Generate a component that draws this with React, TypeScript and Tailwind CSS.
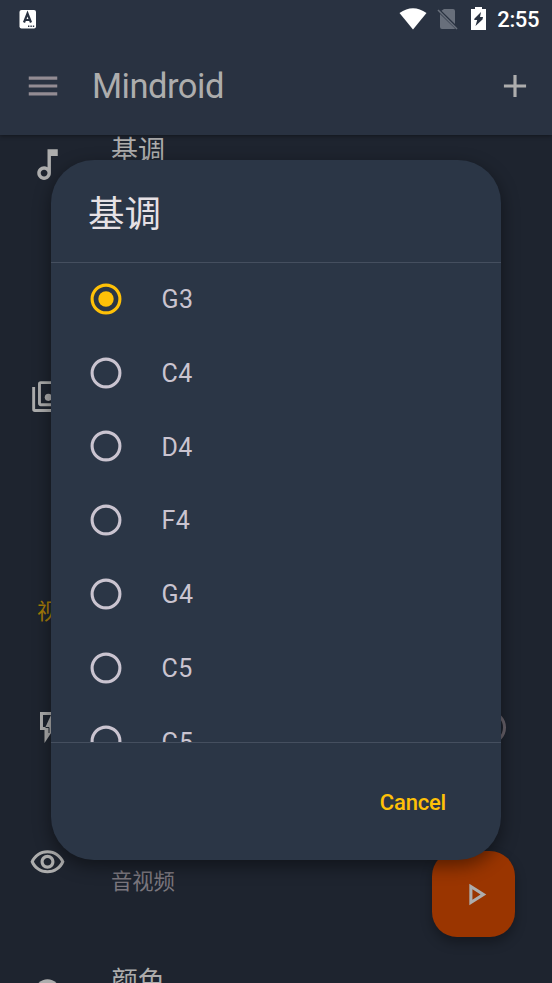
import React from 'react';

const notes = ['G3', 'C4', 'D4', 'F4', 'G4', 'C5', 'G5'];

const StatusBar: React.FC = () => (
  <div className="flex h-[37px] items-center justify-between pl-[19px] pr-[13px] text-white">
    <svg width="18" height="20" viewBox="0 0 18 20">
      <rect x="0.5" y="1" width="16.5" height="18.5" rx="2" fill="white" />
      <path d="M5 13.5L8.5 4.5L12 13.5M6.2 11H10.8" fill="none" stroke="#293241" strokeWidth="2.2" />
      <path d="M9 17.2H15.5" stroke="#293241" strokeWidth="1.4" strokeDasharray="1.4 1" />
    </svg>
    <div className="flex items-center">
      <svg width="28" height="22" viewBox="0 0 28 22" fill="white">
        <path d="M0.5 5Q14 -4.5 27.5 5L14 21.5Z" />
      </svg>
      <svg className="ml-[10px]" width="21" height="22" viewBox="0 0 21 22">
        <path d="M7 1H16Q18 1 18 3V16L4.5 2.8ZM3 6L18 20.5Q17.5 21 16.5 21H5Q3 21 3 19Z" fill="#686f7b" />
        <path d="M1 2L20 21" stroke="#686f7b" strokeWidth="1.6" />
      </svg>
      <svg className="ml-[13px]" width="15" height="23" viewBox="0 0 15 23">
        <path d="M4 0H11V2H15V23H0V2H4Z" fill="white" />
        <path d="M10 5L3.5 11.5L3.2 13H6.2L4.5 19L11.5 12.5L12 10H9Z" fill="#293241" />
      </svg>
      <span className="ml-[11px] mt-0.5 text-[22px] font-medium leading-6 tracking-[-0.4px]">2:55</span>
    </div>
  </div>
);

const AppBar: React.FC = () => (
  <header className="relative h-[135px] bg-[#293241] shadow-[0_1px_4px_rgba(0,0,0,0.4)]">
    <StatusBar />
    <div className="flex h-[98px] items-center pl-6 pr-[18px]">
      <svg width="38" height="38" viewBox="0 0 24 24" fill="#938c93">
        <path d="M3 18h18v-2H3v2zm0-5h18v-2H3v2zm0-7v2h18V6H3z" />
      </svg>
      <h1 className="ml-[30px] flex-1 text-[34.5px] leading-10 tracking-[-0.5px] text-[#adadad]">Mindroid</h1>
      <svg width="38" height="38" viewBox="0 0 24 24" fill="#adadad">
        <path d="M19 13h-6v6h-2v-6H5v-2h6V5h2v6h6v2z" />
      </svg>
    </div>
  </header>
);

const Settings: React.FC = () => (
  <main className="flex-1 overflow-hidden text-[#adadad]">
    <div className="flex h-[236px] pl-[27px]">
      <svg className="mt-[9px]" width="41" height="41" viewBox="0 0 24 24" fill="currentColor">
        <path d="M12 3l.01 10.55c-.59-.34-1.27-.55-2-.55C7.79 13 6 14.79 6 17s1.79 4 4.01 4S14 19.21 14 17V7h4V3h-6zm-1.99 16c-1.1 0-2-.9-2-2s.9-2 2-2 2 .9 2 2-.9 2-2 2z" />
      </svg>
      <p className="ml-[43px] mt-0.5 text-[27px] leading-7">基调</p>
    </div>
    <div className="flex h-[225px] pl-[27px]">
      <svg className="mt-[5px]" width="41" height="41" viewBox="0 0 24 24" fill="none" stroke="currentColor" strokeWidth="1.7">
        <path d="M3.9 6.5V19.5Q3.9 20.2 4.6 20.2H18" />
        <rect x="7.3" y="3.9" width="12.8" height="12.9" rx="0.8" />
        <circle cx="12.5" cy="12.5" r="2.1" fill="currentColor" stroke="none" />
      </svg>
    </div>
    <p className="h-[111px] pl-[37px] text-[22px] leading-8 text-[#a67c08]">视频</p>
    <div className="flex h-[136px] justify-between pl-[27px] pr-[46px]">
      <svg width="41" height="41" viewBox="0 0 41 41">
        <path d="M13 5H32L26 17H30L17.5 36V23H13Z" fill="currentColor" />
        <path d="M16 8H24L18.5 20H16Z" fill="#1e242f" />
        <path d="M18.5 20.5H22V26" fill="none" stroke="#1e242f" />
      </svg>
      <div className="mt-[3px] h-[35px] w-[62px] rounded-full border-[3px] border-[#69636b]" />
    </div>
    <div className="flex h-[119px] pl-[29px]">
      <svg className="mt-px" width="37" height="37" viewBox="0 0 24 24" fill="currentColor">
        <path d="M12 6c3.79 0 7.17 2.13 8.82 5.5C19.17 14.87 15.79 17 12 17s-7.17-2.13-8.82-5.5C4.83 8.13 8.21 6 12 6m0-2C7 4 2.73 7.11 1 11.5 2.73 15.89 7 19 12 19s9.27-3.11 11-7.5C21.27 7.11 17 4 12 4zm0 5c1.38 0 2.5 1.12 2.5 2.5S13.38 14 12 14s-2.5-1.12-2.5-2.5S10.62 9 12 9m0-2c-2.48 0-4.5 2.02-4.5 4.5S9.52 16 12 16s4.5-2.02 4.5-4.5S14.48 7 12 7z" />
      </svg>
      <p className="ml-[45px] mt-[25px] text-[21.3px] leading-7 text-[#7b777e]">音视频</p>
    </div>
    <div className="flex pl-[29px]">
      <svg className="mt-[11px]" width="37" height="37" viewBox="0 0 24 24" fill="currentColor">
        <circle cx="12" cy="12" r="8" />
      </svg>
      <p className="ml-[45px] mt-[6px] text-[27px] leading-7">颜色</p>
    </div>
  </main>
);

const Radio: React.FC<{ checked: boolean }> = ({ checked }) => (
  <svg
    className={checked ? 'text-[#ffc107]' : 'text-[#cac4d0]'}
    width="32"
    height="32"
    viewBox="0 0 32 32"
    fill="none"
  >
    <circle cx="16" cy="16" r="13.9" stroke="currentColor" strokeWidth="3.1" />
    {checked && <circle cx="16" cy="16" r="7.7" fill="currentColor" />}
  </svg>
);

const ToneDialog: React.FC = () => (
  <div className="absolute left-[51px] top-[160px] flex h-[700px] w-[450px] flex-col overflow-hidden rounded-[43px] bg-[#2b3646] shadow-[0_6px_18px_rgba(0,0,0,0.45)]">
    <h2 className="h-[103px] border-b border-[#454f5f] pl-[37px] pt-[31px] text-[36.5px] leading-[48px] text-[#e6e1e5]">
      基调
    </h2>
    <ul className="h-[480px] overflow-hidden">
      {notes.map((note, index) => (
        <li key={note} className="flex h-[73.75px] items-center pb-[2px] pl-[39px]">
          <Radio checked={index === 0} />
          <span className="ml-[39.5px] mt-[2px] text-[25px] tracking-[0.4px] text-[#cac4d0]">{note}</span>
        </li>
      ))}
    </ul>
    <div className="-mt-px flex flex-1 items-center justify-end border-t border-[#454f5f] pr-[55px] pt-0.5">
      <button className="text-[22px] font-medium leading-7 tracking-[-0.2px] text-[#ffc107]">Cancel</button>
    </div>
  </div>
);

const App: React.FC = () => {
  return (
    <div className="relative flex h-[983px] w-[552px] flex-col overflow-hidden bg-[#1e242f] font-[Roboto,'Noto_Sans_CJK_SC',sans-serif]">
      <AppBar />
      <Settings />
      {/* Play button */}
      <div className="absolute left-[432px] top-[851px] flex h-[86px] w-[83px] items-center justify-center rounded-[25px] bg-[#9a3500] shadow-[0_6px_12px_rgba(0,0,0,0.3)]">
        <svg className="ml-[3px]" width="37" height="37" viewBox="0 0 24 24" fill="#adadad">
          <path d="M10 8.64L15.27 12 10 15.36V8.64M8 5v14l11-7L8 5z" />
        </svg>
      </div>
      <ToneDialog />
    </div>
  );
};

export default App;
